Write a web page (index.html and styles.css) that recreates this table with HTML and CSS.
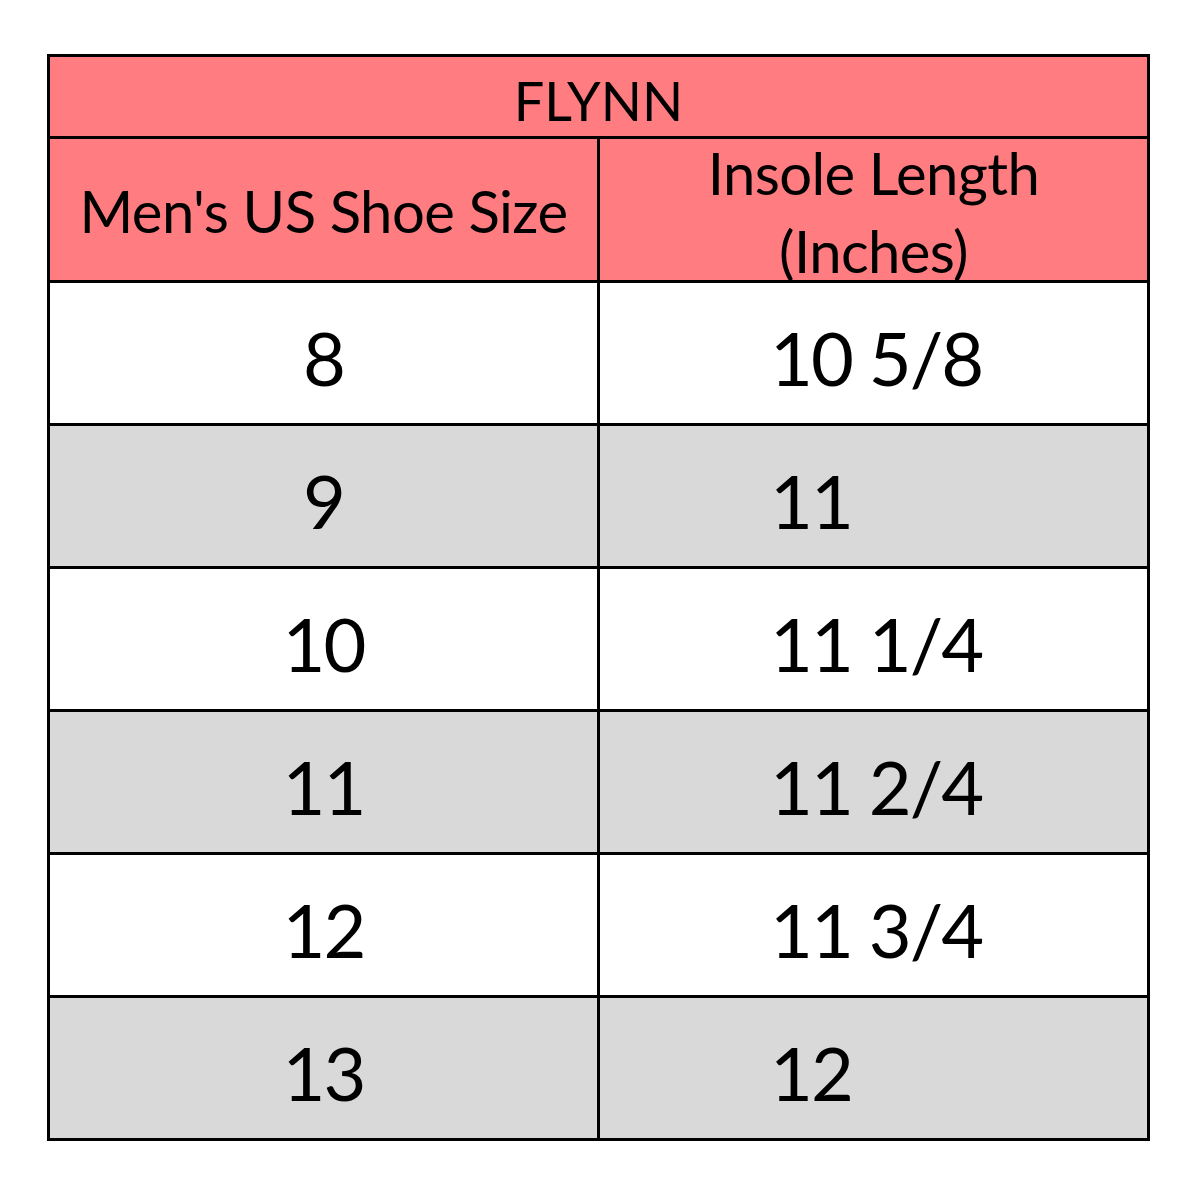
FILE: index.html
```html
<!DOCTYPE html>
<html>
<head>
<meta charset="utf-8">
<link rel="stylesheet" href="styles.css">
</head>
<body>
<div class="chart">
  <div class="cell title">FLYNN</div>
  <div class="cell head">Men's US Shoe Size</div>
  <div class="cell head head-right"><span>Insole Length</span><span>(Inches)</span></div>
  <div class="cell size">8</div><div class="cell len">10 5/8</div>
  <div class="cell size alt">9</div><div class="cell len alt">11</div>
  <div class="cell size">10</div><div class="cell len">11 1/4</div>
  <div class="cell size alt">11</div><div class="cell len alt">11 2/4</div>
  <div class="cell size">12</div><div class="cell len">11 3/4</div>
  <div class="cell size alt">13</div><div class="cell len alt">12</div>
</div>
</body>
</html>
```
FILE: styles.css
```css
html, body {
  margin: 0;
  padding: 0;
  background: #fff;
}
body {
  font-family: Lato, "Open Sans", sans-serif;
  color: #000;
}
.chart {
  margin: 54px 0 0 47px;
  width: 1103px;
  box-sizing: border-box;
  background: #000;
  padding: 3px;
  display: grid;
  grid-template-columns: 547px 547px;
  grid-template-rows: 79px 141px repeat(6, 140px);
  gap: 3px;
}
.cell {
  background: #fff;
  display: flex;
  align-items: center;
  justify-content: center;
  overflow: hidden;
  box-sizing: border-box;
}
.title {
  grid-column: 1 / span 2;
  background: #ff7c80;
  font-size: 54px;
  padding-top: 8px;
}
.head {
  background: #ff7c80;
  font-size: 58px;
  letter-spacing: -0.6px;
  padding-top: 2px;
}
.head-right {
  flex-direction: column;
  line-height: 78px;
  padding-top: 4px;
  overflow: visible;
}
.size, .len {
  font-size: 74px;
  letter-spacing: -2px;
  padding-top: 8px;
}
.len {
  justify-content: flex-start;
  padding-left: 170px;
}
.alt {
  background: #d9d9d9;
}
```
